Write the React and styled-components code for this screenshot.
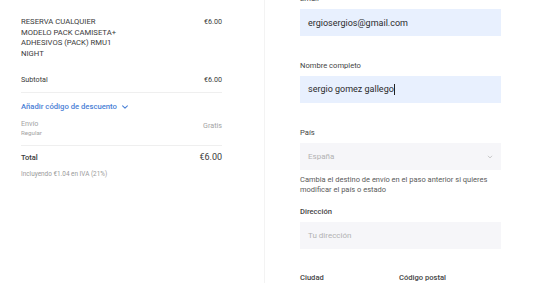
import React from "react";
import styled, { createGlobalStyle } from "styled-components";

const GlobalStyle = createGlobalStyle`
  html, body {
    margin: 0;
    padding: 0;
    background: #ffffff;
  }
  body {
    font-family: Roboto, "Liberation Sans", Arial, sans-serif;
    color: #333333;
    -webkit-font-smoothing: antialiased;
  }
`;

// 두 컬럼 레이아웃
const Page = styled.div`
  display: grid;
  grid-template-columns: 265px 1fr;
  height: 283px;
  overflow: hidden;
`;

// 왼쪽: 주문 요약
const Summary = styled.section`
  border-right: 1px solid #f3f3f3;
  padding: 17px 0 0 21px;
`;

const SummaryInner = styled.div`
  width: 201px;
  display: flex;
  flex-direction: column;
`;

const Row = styled.div`
  display: flex;
  justify-content: space-between;
  align-items: ${(p) => p.$align || "flex-start"};
  margin-top: ${(p) => p.$mt || 0}px;
`;

const ItemName = styled.div`
  width: 100px;
  font-size: 7.7px;
  line-height: 10.6px;
  text-transform: uppercase;
  color: #3a3a3a;
`;

const Price = styled.div`
  font-size: ${(p) => p.$size || 7.2}px;
  line-height: ${(p) => p.$lh || 10}px;
  color: ${(p) => p.$muted ? "#a3a3a3" : "#3a3a3a"};
  padding-top: ${(p) => p.$pt || 0}px;
`;

const Label = styled.div`
  font-size: ${(p) => p.$size || 7.2}px;
  line-height: ${(p) => p.$lh || 10}px;
  font-weight: ${(p) => p.$weight || 400};
  color: ${(p) => p.$muted ? "#a3a3a3" : "#3a3a3a"};
`;

const Divider = styled.hr`
  border: 0;
  border-top: 1px solid #efefef;
  margin: ${(p) => p.$mt || 7}px 0 0 0;
  width: 100%;
`;

const DiscountLink = styled.a`
  display: flex;
  align-items: center;
  gap: 4px;
  margin-top: 9px;
  font-size: 7.7px;
  line-height: 10px;
  font-weight: 500;
  color: #4a80d6;
  cursor: pointer;
`;

const ShippingLabels = styled.div`
  display: flex;
  flex-direction: column;
`;

const Note = styled.div`
  margin-top: 7px;
  font-size: 6.4px;
  line-height: 9px;
  color: #9a9a9a;
`;

// 오른쪽: 배송 폼
const Form = styled.section`
  padding-left: 35px;
`;

const FormInner = styled.div`
  width: 201px;
  margin-top: -6px;
  display: flex;
  flex-direction: column;
`;

const Field = styled.div`
  display: flex;
  flex-direction: column;
  margin-top: ${(p) => p.$mt || 0}px;
`;

const FieldLabel = styled.label`
  font-size: 7.6px;
  line-height: 10px;
  font-weight: ${(p) => p.$bold ? 500 : 400};
  color: #444444;
  margin-bottom: 5px;
`;

const InputBox = styled.div`
  height: 27px;
  box-sizing: border-box;
  padding: 0 8px;
  display: flex;
  align-items: center;
  justify-content: space-between;
  background: ${(p) => p.$filled ? "#e8f0fe" : "#f6f6f9"};
  font-size: ${(p) => p.$filled ? 9 : 8}px;
  color: ${(p) => p.$filled ? "#2b2b2b" : "#b2b2b2"};
`;

const Caret = styled.span`
  display: inline-block;
  width: 1px;
  height: 11px;
  background: #222;
  vertical-align: middle;
  margin-left: 0.5px;
`;

const Help = styled.p`
  margin: 5px 0 0 0;
  font-size: 7.5px;
  line-height: 10px;
  color: #5a5a5a;
`;

const SplitLabels = styled.div`
  display: grid;
  grid-template-columns: 99px 1fr;
  margin-top: 24px;
`;

const Chevron = ({ color, size }) => (
  <svg width={size} height={size} viewBox="0 0 10 10" fill="none">
    <path d="M2 3.5 L5 6.5 L8 3.5" stroke={color} strokeWidth="1.3" strokeLinecap="round" strokeLinejoin="round" />
  </svg>
);

const App = () => {
  return (
    <>
      <GlobalStyle />
      <Page>
        <Summary>
          <SummaryInner>
            <Row>
              <ItemName>Reserva cualquier modelo pack camiseta+ adhesivos (pack) RMU1 night</ItemName>
              <Price $lh={10.6}>€6.00</Price>
            </Row>
            <Row $mt={16}>
              <Label>Subtotal</Label>
              <Price>€6.00</Price>
            </Row>
            <Divider $mt={7} />
            <DiscountLink>
              Añadir código de descuento
              <Chevron color="#4a80d6" size={8} />
            </DiscountLink>
            <Row $mt={7}>
              <ShippingLabels>
                <Label $muted>Envío</Label>
                <Label $muted $size={6.2} $lh={9}>Regular</Label>
              </ShippingLabels>
              <Price $muted $pt={2}>Gratis</Price>
            </Row>
            <Divider $mt={7} />
            <Row $mt={6} $align="center">
              <Label $size={7.5} $lh={11} $weight={500}>Total</Label>
              <Price $size={9} $lh={11}>€6.00</Price>
            </Row>
            <Note>Incluyendo €1.04 en IVA (21%)</Note>
          </SummaryInner>
        </Summary>

        <Form>
          <FormInner>
            <Field>
              <FieldLabel>Email</FieldLabel>
              <InputBox $filled>ergiosergios@gmail.com</InputBox>
            </Field>
            <Field $mt={25}>
              <FieldLabel>Nombre completo</FieldLabel>
              <InputBox $filled>
                <span>
                  sergio gomez gallego
                  <Caret />
                </span>
              </InputBox>
            </Field>
            <Field $mt={25}>
              <FieldLabel>País</FieldLabel>
              <InputBox>
                España
                <Chevron color="#b8b8b8" size={6} />
              </InputBox>
            </Field>
            <Help>
              Cambia el destino de envío en el paso anterior si quieres modificar el país o estado
            </Help>
            <Field $mt={12}>
              <FieldLabel $bold>Dirección</FieldLabel>
              <InputBox>Tu dirección</InputBox>
            </Field>
            <SplitLabels>
              <FieldLabel $bold>Ciudad</FieldLabel>
              <FieldLabel $bold>Código postal</FieldLabel>
            </SplitLabels>
          </FormInner>
        </Form>
      </Page>
    </>
  );
};

export default App;
